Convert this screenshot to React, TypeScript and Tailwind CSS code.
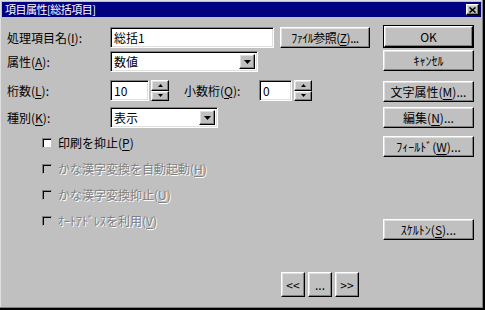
import React from "react";

const raised =
  "bg-[#c0c0c0] border border-t-white border-l-white border-r-black border-b-black shadow-[inset_-1px_-1px_#808080,inset_1px_1px_#dfdfdf]";
const sunken =
  "bg-white border border-t-[#808080] border-l-[#808080] border-r-white border-b-white shadow-[inset_1px_1px_#000,inset_-1px_-1px_#dfdfdf]";
const disabledText = "text-[#808080] [text-shadow:1px_1px_0_#fff]";

function U({ c }: { c: string }) {
  return <span className="underline underline-offset-[2px]">{c}</span>;
}

function DownArrow() {
  return (
    <svg width="7" height="4" viewBox="0 0 7 4">
      <path d="M0 0h7L3.5 4z" fill="#000" />
    </svg>
  );
}

function Combo({ value, width }: { value: string; width: string }) {
  return (
    <div className={`${sunken} ${width} h-[21px] flex items-center p-[2px]`}>
      <span className="flex-1 pl-[1px] leading-none">{value}</span>
      <div className={`${raised} w-[16px] h-full flex items-center justify-center`}>
        <DownArrow />
      </div>
    </div>
  );
}

function Spinner() {
  return (
    <div className="flex flex-col w-[18px] h-[21px] ml-[2px]">
      <div className={`${raised} flex-1 flex items-center justify-center`}>
        <svg width="5" height="3" viewBox="0 0 5 3">
          <path d="M2.5 0L5 3H0z" fill="#000" />
        </svg>
      </div>
      <div className={`${raised} flex-1 flex items-center justify-center`}>
        <svg width="5" height="3" viewBox="0 0 5 3">
          <path d="M0 0h5L2.5 3z" fill="#000" />
        </svg>
      </div>
    </div>
  );
}

function Btn({ children, className = "" }: { children: React.ReactNode; className?: string }) {
  return (
    <div className={`${raised} flex items-center justify-center leading-none ${className}`}>
      {children}
    </div>
  );
}

function Check({ label, enabled = false }: { label: React.ReactNode; enabled?: boolean }) {
  return (
    <div className="flex items-center h-[14px]">
      <div
        className={`w-[10px] h-[10px] border border-t-[#808080] border-l-[#808080] border-r-[#c0c0c0] border-b-[#c0c0c0] shadow-[inset_1px_1px_#000] ${
          enabled ? "bg-white" : "bg-[#c0c0c0]"
        }`}
      />
      <span className={`ml-[6px] leading-none ${enabled ? "text-black" : disabledText}`}>{label}</span>
    </div>
  );
}

export default function App() {
  return (
    <div className="w-[485px] h-[310px] bg-[#c0c0c0] font-['Noto_Sans_CJK_JP',sans-serif] text-[12px] text-black overflow-hidden">
      <div className="w-full h-full flex flex-col border-r-2 border-b-2 border-black shadow-[inset_-1px_-1px_#808080,inset_1px_1px_#dfdfdf]">
        {/* タイトルバー */}
        <div className="mx-[2px] mt-[2px] h-[15px] bg-[#000080] flex items-center justify-between pl-[3px] pr-[2px]">
          <span className="text-white text-[11px] leading-none tracking-[-0.5px]">項目属性[総括項目]</span>
          <div className={`${raised} w-[13px] h-[11px] flex items-center justify-center`}>
            <svg width="7" height="6" viewBox="0 0 7 6">
              <path d="M0.5 0.5L6.5 5.5M6.5 0.5L0.5 5.5" stroke="#000" strokeWidth="1.6" />
            </svg>
          </div>
        </div>

        <div className="flex flex-1">
          {/* 左側 */}
          <div className="w-[376px] pl-[7px] flex flex-col">
            <div className="flex items-center h-[21px] mt-[10px]">
              <span className="w-[103px]">
                処理項目名(<U c="I" />):
              </span>
              <div className={`${sunken} w-[164px] h-[21px] flex items-center px-[3px]`}>総括1</div>
              <Btn className="w-[90px] h-[21px] ml-[6px] tracking-[-0.5px]">
                ﾌｧｲﾙ参照(<U c="Z" />)...
              </Btn>
            </div>

            <div className="flex items-center h-[21px] mt-[3px]">
              <span className="w-[103px]">
                属性(<U c="A" />):
              </span>
              <Combo value="数値" width="w-[148px]" />
            </div>

            <div className="flex items-center h-[21px] mt-[8px]">
              <span className="w-[103px]">
                桁数(<U c="L" />):
              </span>
              <div className={`${sunken} w-[39px] h-[21px] flex items-center px-[3px]`}>10</div>
              <Spinner />
              <span className="ml-[15px] w-[75px]">
                小数桁(<U c="Q" />):
              </span>
              <div className={`${sunken} w-[33px] h-[21px] flex items-center px-[3px]`}>0</div>
              <Spinner />
            </div>

            <div className="flex items-center h-[21px] mt-[6px]">
              <span className="w-[103px]">
                種別(<U c="K" />):
              </span>
              <Combo value="表示" width="w-[108px]" />
            </div>

            <div className="flex flex-col pl-[35px] mt-[8px] gap-[12px]">
              <Check
                enabled
                label={
                  <>
                    印刷を抑止(<U c="P" />)
                  </>
                }
              />
              <Check
                label={
                  <>
                    かな漢字変換を自動起動(<U c="H" />)
                  </>
                }
              />
              <Check
                label={
                  <>
                    かな漢字変換抑止(<U c="U" />)
                  </>
                }
              />
              <Check
                label={
                  <>
                    ｵｰﾄｱﾄﾞﾚｽを利用(<U c="V" />)
                  </>
                }
              />
            </div>
          </div>

          {/* 右側ボタン */}
          <div className="w-[91px] ml-[7px] flex flex-col">
            <div className="mt-[8px] border border-black">
              <Btn className="h-[21px]">OK</Btn>
            </div>
            <Btn className="h-[21px] mt-[2px]">ｷｬﾝｾﾙ</Btn>
            <Btn className="h-[21px] mt-[10px]">
              文字属性(<U c="M" />)...
            </Btn>
            <Btn className="h-[21px] mt-[5px]">
              編集(<U c="N" />)...
            </Btn>
            <Btn className="h-[21px] mt-[8px]">
              ﾌｨｰﾙﾄﾞ(<U c="W" />)...
            </Btn>
            <Btn className="h-[21px] mt-[62px]">
              ｽｹﾙﾄﾝ(<U c="S" />)...
            </Btn>
          </div>
        </div>

        {/* ページ送り */}
        <div className="flex pl-[281px] gap-[3px] mb-[11px]">
          <Btn className="w-[24px] h-[25px]">&lt;&lt;</Btn>
          <Btn className="w-[24px] h-[25px]">...</Btn>
          <Btn className="w-[24px] h-[25px]">&gt;&gt;</Btn>
        </div>
      </div>
    </div>
  );
}
